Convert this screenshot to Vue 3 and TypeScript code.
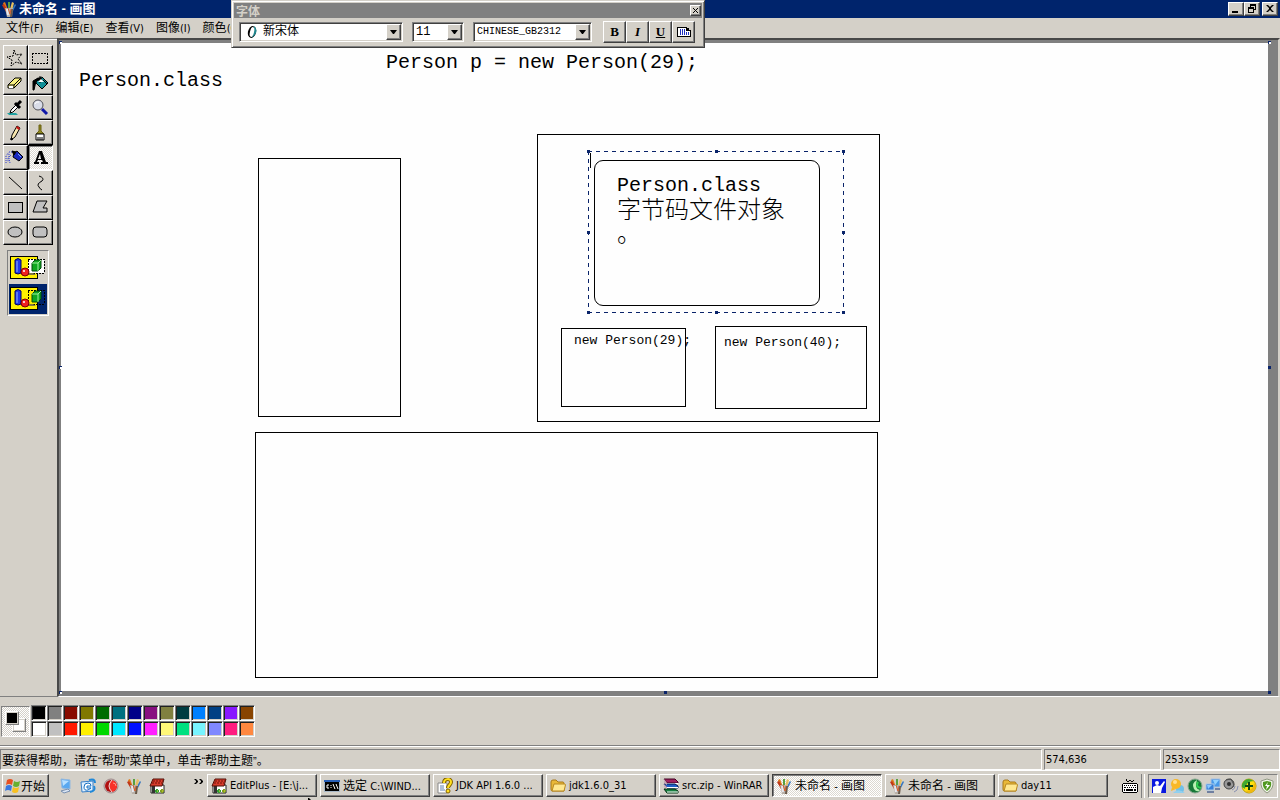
<script setup lang="ts">
import { ref } from 'vue'

interface Box { x: number; y: number; w: number; h: number; round?: boolean }
interface Note { x: number; y: number; text: string; kind: string }
interface Task { icon: string; label: string; active?: boolean }

// Splits a label into Chinese and Latin runs so each gets its own face.
function runs(text: string): { s: string; han: boolean }[] {
  const parts = text.match(/[\u3000-\u9fff\uff00-\uffef]+|[^\u3000-\u9fff\uff00-\uffef]+/g) ?? []
  return parts.map((s) => ({ s, han: /[\u3000-\u9fff\uff00-\uffef]/.test(s) }))
}

const menus = ['文件(F)', '编辑(E)', '查看(V)', '图像(I)', '颜色(C)']

const tools = [
  '任意形状裁剪', '选定', '橡皮', '用颜色填充', '取色', '放大镜', '铅笔', '刷子',
  '喷枪', '文字', '直线', '曲线', '矩形', '多边形', '椭圆', '圆角矩形',
]
const activeTool = ref(9)

const boxes: Box[] = [
  { x: 197, y: 115, w: 143, h: 259 },
  { x: 476, y: 91, w: 343, h: 288 },
  { x: 533, y: 117, w: 226, h: 146, round: true },
  { x: 500, y: 285, w: 125, h: 79 },
  { x: 654, y: 283, w: 152, h: 83 },
  { x: 194, y: 389, w: 623, h: 246 },
]

const notes: Note[] = [
  { x: 18, y: 28, text: 'Person.class', kind: 'large' },
  { x: 325, y: 10, text: 'Person p = new Person(29);', kind: 'large' },
  { x: 556, y: 133, text: 'Person.class', kind: 'large' },
  { x: 556, y: 153, text: '字节码文件对象\n。', kind: 'song' },
  { x: 513, y: 286, text: 'new Person(29);', kind: 'small' },
  { x: 663, y: 288, text: 'new Person(40);', kind: 'small' },
]

const palette = [
  '#000000', '#808080', '#880c00', '#807800', '#006c00', '#007080', '#000088', '#881080', '#808040', '#003c40', '#0080ff', '#004084', '#8818ff', '#884400',
  '#ffffff', '#c0c0c0', '#ff1800', '#fff000', '#00d800', '#00e8ff', '#0010ff', '#ff20ff', '#fff878', '#00e080', '#78f4ff', '#8088ff', '#ff1c80', '#ff8840',
]
const foreground = ref('#000000')

const launchers = [
  { icon: 'desktop', label: '显示桌面' },
  { icon: 'mail', label: 'Outlook Express' },
  { icon: 'red', label: '播放器' },
  { icon: 'paint', label: '画图' },
  { icon: 'edit', label: 'EditPlus' },
]

const tasks: Task[] = [
  { icon: 'edit', label: 'EditPlus - [E:\\j...' },
  { icon: 'cmd', label: '选定 C:\\WIND...' },
  { icon: 'help', label: 'JDK API 1.6.0 ...' },
  { icon: 'folder', label: 'jdk1.6.0_31' },
  { icon: 'rar', label: 'src.zip - WinRAR' },
  { icon: 'paint', label: '未命名 - 画图', active: true },
  { icon: 'paint', label: '未命名 - 画图' },
  { icon: 'folder', label: 'day11' },
]

const tray = ['person', 'chat', 'green', 'net', 'sound', 'plus', 'shield']
</script>

<template>
  <svg class="defs" width="0" height="0" aria-hidden="true">
    <symbol id="i-paint" viewBox="0 0 16 16">
      <path d="M4 8 2 2l2-1 3 8z" fill="#e07818" /><path d="M1 4l2-1 4 7-2 1z" fill="#c03818" />
      <path d="M7 8V1h2v8z" fill="#58a040" /><path d="M9 8l2-7 2 1-2 8z" fill="#e8c060" />
      <path d="M11 8l3-5 1 1-3 6z" fill="#3878c0" />
      <path d="M4 7h8l-1 9H6z" fill="#b8b0a8" /><path d="M6 8l1 6" stroke="#e8e8f0" stroke-width="2" fill="none" />
      <path d="M10 8h2l-1 8H9z" fill="#685848" /><path d="M7 7l2 6 1-5" stroke="#d06030" fill="none" />
    </symbol>
    <symbol id="i-edit" viewBox="0 0 16 16">
      <path d="M2 7h13v8H2z" fill="#fff" stroke="#222" /><path d="M3 8h3v7H3z" fill="#333" />
      <path d="M1 8 4 1h11l-2 7H1z" fill="#d83c2c" stroke="#501008" />
      <path d="M4 3h10M3 5h10" stroke="#701008" stroke-dasharray="2 1" />
      <path d="M6 13h4m-2-2v4" stroke="#30a030" stroke-width="2" /><path d="M11 13h4m-2-2v4" stroke="#80a020" stroke-width="2" />
      <path d="M8 13h1M13 13h1" stroke="#f0d040" />
    </symbol>
    <symbol id="i-cmd" viewBox="0 0 16 16">
      <path d="M0 2h16v12H0z" fill="#a8b8c8" /><path d="M0 2h16v2H0z" fill="#2860b8" /><path d="M1 4h14v9H1z" fill="#000" />
      <path d="M5 7H3v3h2M7 7v1m0 1v1M9 6l2 5M12 6l2 5" stroke="#fff" fill="none" />
    </symbol>
    <symbol id="i-help" viewBox="0 0 16 16">
      <path d="M1 5h9v10H1z" fill="#fff" stroke="#888" /><path d="M3 8h4M3 10h4M3 12h5" stroke="#6080b0" />
      <path d="M7 5c0-5 7-5 7-1 0 3-3 3-3 6" fill="none" stroke="#806000" stroke-width="4" />
      <path d="M7 5c0-5 7-5 7-1 0 3-3 3-3 6" fill="none" stroke="#ffe020" stroke-width="2" />
      <circle cx="11" cy="13" r="2" fill="#ffe020" stroke="#806000" />
    </symbol>
    <symbol id="i-folder" viewBox="0 0 16 16">
      <path d="M1 4q0-2 2-2h3l2 2h5q1 0 1 2v7H2q-1 0-1-2z" fill="#e8b838" stroke="#a87818" />
      <path d="M2 13 4 6h11q1 0 0 3l-1 4z" fill="#ffe890" stroke="#b88820" />
    </symbol>
    <symbol id="i-rar" viewBox="0 0 16 16">
      <path d="M1 1h11l3 3v1H4z" fill="#a02060" stroke="#400020" /><path d="M4 5h11v1H4z" fill="#fff" />
      <path d="M1 6h11l3 2v2H4z" fill="#2060c8" stroke="#001850" /><path d="M4 9h11v1H4z" fill="#fff" />
      <path d="M1 11h11l3 2v2H4z" fill="#188040" stroke="#003010" /><path d="M4 14h11" stroke="#fff" />
      <path d="M1 1l3 4v2L1 5zM1 6l3 3v2L1 9z" fill="#c8a8b8" />
    </symbol>
    <symbol id="i-desktop" viewBox="0 0 16 16">
      <path d="M4 1l9 1v9l-8-1z" fill="#58a8f0" stroke="#90b8e0" /><path d="M5 2l7 1-6 5z" fill="#b8e0ff" />
      <path d="M4 13l7-2 2 2-6 2z" fill="#d8e4f4" stroke="#7890b0" />
    </symbol>
    <symbol id="i-mail" viewBox="0 0 16 16">
      <path d="M1 4l12-1v10l-11 1z" fill="#e0f0ff" stroke="#3880c8" />
      <path d="M8 5q-4 0-4 4t4 3l3-2H7V8h4q0-3-3-3z" fill="#fff" stroke="#1870c0" />
      <path d="M9 2q6-2 6 3M14 8q2 5-4 6" fill="none" stroke="#2088d8" stroke-width="2" />
    </symbol>
    <symbol id="i-red" viewBox="0 0 16 16">
      <circle cx="8" cy="8" r="7" fill="#c8c4c4" stroke="#a08888" /><circle cx="8" cy="8" r="6" fill="#b01010" />
      <path d="M9 2q-6 6 0 12 5-2 5-6t-5-6z" fill="#f83028" /><path d="M9 2q-6 6 0 12" fill="none" stroke="#f0d8d8" />
      <path d="M10 5q3 0 3 3" fill="none" stroke="#ff9888" />
    </symbol>
    <symbol id="i-person" viewBox="0 0 16 16">
      <path d="M1 1h14v14H1z" fill="#0818e0" /><path d="M2 15V9l4-2 3 1 4-5 1 1-3 6-1 5z" fill="#fff" /><circle cx="6" cy="5" r="2" fill="#fff" />
    </symbol>
    <symbol id="i-chat" viewBox="0 0 16 16">
      <circle cx="11" cy="11" r="4" fill="#70c0e8" /><path d="M5 14q5-4 11 1H4z" fill="#90d0f0" />
      <circle cx="7" cy="6" r="5" fill="#f8b828" /><path d="M3 9l-1 4 5-2z" fill="#f8b828" /><circle cx="6" cy="4" r="2" fill="#ffe090" />
    </symbol>
    <symbol id="i-green" viewBox="0 0 16 16">
      <circle cx="8" cy="8" r="7" fill="#187838" stroke="#88a890" /><path d="M10 2q-6 3-3 9 3 4 6 1-6-1-3-10z" fill="#b8f0b0" />
      <path d="M11 4q-3 5 3 6" stroke="#30d050" stroke-width="2" fill="none" />
    </symbol>
    <symbol id="i-net" viewBox="0 0 16 16">
      <path d="M6 1h9v8H6z" fill="#4898e8" stroke="#a8c0e0" /><path d="M8 2h6l-4 5z" fill="#90d0ff" />
      <path d="M1 6h8v6H1z" fill="#3880d8" stroke="#a8c8e8" /><path d="M2 7h5l-4 4z" fill="#88c8ff" /><path d="M2 14h7M10 11h5" stroke="#7080a0" stroke-width="2" />
    </symbol>
    <symbol id="i-sound" viewBox="0 0 16 16">
      <circle cx="6" cy="6" r="5" fill="#989898" stroke="#404040" /><circle cx="6" cy="6" r="2" fill="#303030" />
      <path d="M3 2l5-1 3 6-2 3" fill="none" stroke="#505050" /><path d="M9 12q3-1 3-4M11 14q4-1 4-6" fill="none" stroke="#8890b0" />
    </symbol>
    <symbol id="i-plus" viewBox="0 0 16 16">
      <circle cx="8" cy="8" r="7" fill="#ffe010" stroke="#b8a010" /><path d="M1 9a7 7 0 0 1 7-8l5 2q-8 0-9 8z" fill="#40a830" />
      <path d="M15 7a7 7 0 0 1-7 8l-4-2q8 0 9-8z" fill="#f0b810" /><path d="M8 4v8M4 8h8" stroke="#104810" stroke-width="2" />
    </symbol>
    <symbol id="i-shield" viewBox="0 0 16 16">
      <path d="M8 1l6 2q1 8-6 12-7-4-6-12z" fill="#f0f4e8" stroke="#909880" /><path d="M8 3l4 1q1 6-4 9-5-3-4-9z" fill="#509820" />
      <path d="M9 4 6 8h2l-1 4 4-5H8z" fill="#fff" />
    </symbol>
  </svg>

  <div class="screen">
    <header class="title-bar">
      <svg class="ic" viewBox="0 0 16 16" aria-hidden="true"><use href="#i-paint" /></svg>
      <h1>未命名 - 画图</h1>
      <div class="win-buttons">
        <button class="raised" aria-label="最小化"><svg viewBox="0 0 12 10"><path d="M2 7h6v2H2z" /></svg></button>
        <button class="raised" aria-label="还原"><svg viewBox="0 0 12 10"><path d="M4 0h6v6H8V5h1V2H5v1H4zM2 3h6v6H2zm1 2v3h4V5z" fill-rule="evenodd" /></svg></button>
        <button class="raised close" aria-label="关闭"><svg viewBox="0 0 12 10"><path d="M2 1h2l2 2 2-2h2L7 4v1l3 3H8L6 6 4 8H2l3-3V4z" /></svg></button>
      </div>
    </header>

    <nav class="menu-bar">
      <button v-for="m in menus" :key="m"><span v-for="(r, i) in runs(m)" :key="i" :class="{ han: r.han }">{{ r.s }}</span></button>
    </nav>

    <div class="workspace">
      <aside class="toolbox">
        <div class="tools">
          <button v-for="(t, i) in tools" :key="t" :aria-label="t" :aria-pressed="activeTool === i" :class="['raised', { on: activeTool === i }]" @click="activeTool = i">
            <svg viewBox="0 0 20 20" fill="none" stroke="#000">
              <path v-if="i === 0" d="M9 2l2 5 6-1-4 5 4 5-6-2-5 4 1-6-5-3 6-1z" stroke-dasharray="2 1" />
              <path v-else-if="i === 1" d="M2 5h15v10H2z" stroke-dasharray="2 1" class="px" />
              <g v-else-if="i === 2"><path d="M3 12l7-7h6v3l-7 7H3z" fill="#f8f080" /><path d="M3 12h6l7-7M9 12v3" /><path d="M4 13h4v2H4z" fill="#fff" stroke="none" /></g>
              <g v-else-if="i === 3"><path d="M7 6l5-2 6 6-6 6-6-6z" fill="#109098" /><path d="M3 17V8l5-3 4 1-6 2-2 9z" fill="#000" /><path d="M10 3v7M13 7l4 4" /><path d="M8 9l3-3 3 3z" fill="#fff" stroke="none" /></g>
              <g v-else-if="i === 4"><path d="M2 15h9l2 2H4z" fill="#20a0a0" stroke="none" /><path d="M5 15l1-3 5-5 2 2-5 5z" fill="#fff" /><path d="M10 5l5 5M12 7l4-4" stroke-width="3" /></g>
              <g v-else-if="i === 5"><circle cx="8" cy="7" r="5" fill="#d8dce8" stroke="#505058" /><path d="M5 6q1-3 4-2" stroke="#fff" /><path d="M12 11l5 5" stroke="#1018a8" stroke-width="3" /></g>
              <g v-else-if="i === 6"><path d="M6 17l1-5 5-9 3 2-5 9z" fill="#f8e8b0" /><path d="M12 3l3 2-1 2-3-2z" fill="#c81818" stroke="none" /><path d="M6 17v-2l2 1z" fill="#000" /></g>
              <g v-else-if="i === 7"><path d="M9 2h2v6l3 3H6l3-3z" fill="#908820" stroke="#686010" /><path d="M6 11h8v6H6z" fill="#fff" /><path d="M8 14v3M10 14v3M12 14v3" /></g>
              <g v-else-if="i === 8"><path d="M9 5l3-2 6 6-4 4-6-4z" fill="#1828c0" /><path d="M7 3l4 1-2 3z" fill="#000" /><path d="M13 6l3 3" stroke="#80a8f8" /><path d="M7 4H4L1 8v7M4 6v5l1 4M6 7l-3 3v4" stroke="#2838d0" stroke-dasharray="1 1" /></g>
              <path v-else-if="i === 9" d="M9 3h3l4 11h2v2h-7v-2h2l-1-2H8l-1 2h2v2H4v-2h1zM10 6l-2 5h3z" fill="#000" fill-rule="evenodd" stroke="none" />
              <path v-else-if="i === 10" d="M4 4l13 12" />
              <path v-else-if="i === 11" d="M9 3q6 2 3 5-6 3-3 6 1 2 3 3" />
              <path v-else-if="i === 12" d="M3 4h14v10H3z" fill="#c0c0c0" class="px" />
              <path v-else-if="i === 13" d="M7 3h10l-4 7h4v4H3z" fill="#c0c0c0" />
              <ellipse v-else-if="i === 14" cx="10" cy="9" rx="7" ry="5" fill="#c0c0c0" />
              <rect v-else x="3" y="4" width="14" height="10" rx="3" fill="#c0c0c0" />
            </svg>
          </button>
        </div>
        <div class="options">
          <button v-for="n in 2" :key="n" :class="{ chosen: n === 2 }" :aria-label="n === 1 ? '不透明处理' : '透明处理'">
            <svg viewBox="1 2 38 28">
              <path class="px" d="M2 4h27v22H2z" fill="#fff000" stroke="#000" />
              <path v-if="n === 1" d="M20 7h16v14H20z" fill="#fff" />
              <path class="px" d="M20 7h16v14H20z" fill="none" stroke="#000" stroke-dasharray="2 1" />
              <path d="M7 8q3-3 6 0v13q-3 2-6 0z" fill="#2038e8" stroke="#000060" /><path d="M9 9v11" stroke="#90b8ff" />
              <path d="M18 23h10l-3-2h-6z" fill="#807840" /><circle cx="17" cy="20" r="4" fill="#f02020" stroke="#800000" /><circle cx="16" cy="19" r="1" fill="#fff" />
              <path d="M24 11l3-3h6v8l-3 3h-6z" fill="#10a820" stroke="#004808" /><path d="M24 11h6v8M30 11l3-3" stroke="#a0f0a0" fill="none" />
            </svg>
          </button>
        </div>
      </aside>

      <main class="pane">
        <div class="canvas">
          <div v-for="(b, i) in boxes" :key="i" :class="['box', { round: b.round }]" :style="{ left: b.x + 'px', top: b.y + 'px', width: b.w + 'px', height: b.h + 'px' }"></div>
          <p v-for="(n, i) in notes" :key="'n' + i" :class="['note', n.kind]" :style="{ left: n.x + 'px', top: n.y + 'px' }">{{ n.text }}</p>
          <div class="selection">
            <textarea aria-label="文字"></textarea>
            <i class="caret"></i>
            <i v-for="h in ['nw', 'n', 'ne', 'w', 'e', 'sw', 's', 'se']" :key="h" :class="['grip', h]"></i>
          </div>
        </div>
        <i v-for="h in ['tl', 'tr', 'ml', 'bl']" :key="h" :class="['handle', 'hollow', h]"></i>
        <i v-for="h in ['mr', 'bm', 'br']" :key="h" :class="['handle', h]"></i>
      </main>
    </div>

    <section class="color-bar" aria-label="颜料盒">
      <div class="current"><i class="back"></i><i class="front" :style="{ background: foreground }"></i></div>
      <div class="swatches">
        <button v-for="c in palette" :key="c" :aria-label="c" :style="{ background: c }" @click="foreground = c"></button>
      </div>
    </section>

    <footer class="status-bar">
      <div class="cell grow"><span v-for="(r, i) in runs('要获得帮助，请在“帮助”菜单中，单击“帮助主题”。')" :key="i" :class="{ han: r.han, quote: !r.han }">{{ r.s }}</span></div>
      <div class="cell">574,636</div>
      <div class="cell">253x159</div>
    </footer>

    <div class="taskbar">
      <button class="start raised">
        <svg class="ic" viewBox="0 0 16 16" aria-hidden="true">
          <path d="M3 2q3-2 6 0L8 7q-3-2-6 0z" fill="#e85020" /><path d="M10 3q3 2 6 0l-1 5q-3 2-6 0z" fill="#68b030" />
          <path d="M2 8q3-2 6 0l-1 5q-3-2-6 0z" fill="#3878e0" /><path d="M9 9q3 2 6 0l-1 5q-3 2-6 0z" fill="#f8c020" />
        </svg><span class="han">开始</span>
      </button>
      <div class="quick">
        <button v-for="l in launchers" :key="l.icon" :aria-label="l.label"><svg class="ic" viewBox="0 0 16 16"><use :href="'#i-' + l.icon" /></svg></button>
      </div>
      <button class="more" aria-label="更多"><svg viewBox="0 0 9 6"><path d="M0 0h2l2 2v1L2 5H0l2-2V2zM5 0h2l2 2v1L7 5H5l2-2V2z" /></svg></button>
      <div class="tasks">
        <button v-for="(t, i) in tasks" :key="i" :class="['raised', { on: t.active }]">
          <svg class="ic" viewBox="0 0 16 16" aria-hidden="true"><use :href="'#i-' + t.icon" /></svg>
          <span class="label"><span v-for="(r, k) in runs(t.label)" :key="k" :class="{ han: r.han }">{{ r.s }}</span></span>
        </button>
      </div>
      <svg class="keyboard px" viewBox="0 0 16 14" aria-label="输入法">
        <path d="M4 0h1v2H4zM5 2h2v1H5zM7 1h2v1H7zM9 2h2v1H9zM11 1h1v1h-1z" />
        <path fill-rule="evenodd" d="M1 4h14v1h1v8h-1v1H1v-1H0V5h1zM1 5v8h14V5z" /><path d="M1 5h14v8H1z" fill="#fff" />
        <path d="M2 6h1v1H2zM4 6h1v1H4zM6 6h1v1H6zM8 6h1v1H8zM10 6h1v1h-1zM12 6h2v1h-2zM2 8h2v1H2zM5 8h1v1H5zM7 8h1v1H7zM9 8h1v1H9zM11 8h1v1h-1zM13 8h1v1h-1zM2 10h1v2H2zM4 10h7v2H4zM12 10h2v2h-2z" />
      </svg>
      <div class="tray">
        <button v-for="t in tray" :key="t" :aria-label="t"><svg class="ic" viewBox="0 0 16 16"><use :href="'#i-' + t" /></svg></button>
      </div>
    </div>

    <section class="font-window" aria-label="字体">
      <div class="font-title"><h2>字体</h2><button class="raised" aria-label="关闭"><svg viewBox="0 0 9 9" stroke="#000"><path d="M2 2l5 5M7 2l-5 5" /></svg></button></div>
      <div class="font-tools">
        <div class="combo face">
          <svg class="opentype" viewBox="0 0 12 14" aria-hidden="true"><ellipse cx="6" cy="7" rx="4" ry="6" transform="rotate(14 6 7)" fill="#000" /><path d="M8 1q6 5-2 12z" fill="#208890" /><ellipse cx="6" cy="7" rx="2" ry="5" transform="rotate(14 6 7)" fill="#fff" /></svg>
          <select aria-label="字体"><option>新宋体</option></select>
          <span class="arrow raised"><svg viewBox="0 0 7 4"><path d="M0 0h7L4 4H3z" /></svg></span>
        </div>
        <div class="combo size">
          <select aria-label="字号"><option>11</option></select>
          <span class="arrow raised"><svg viewBox="0 0 7 4"><path d="M0 0h7L4 4H3z" /></svg></span>
        </div>
        <div class="combo charset">
          <select aria-label="字符集"><option>CHINESE_GB2312</option></select>
          <span class="arrow raised"><svg viewBox="0 0 7 4"><path d="M0 0h7L4 4H3z" /></svg></span>
        </div>
        <div class="styles">
          <button class="raised"><b>B</b></button>
          <button class="raised"><em>I</em></button>
          <button class="raised"><u>U</u></button>
          <button class="raised" aria-label="竖排文字"><svg class="px" viewBox="0 0 14 10"><path d="M0 0h10v1h2v2h2v7H0z" /><path d="M1 1h9v3h3v5H1z" fill="#fff" /><path d="M3 2h1v6H3zM5 2h1v6H5zM7 2h1v6H7zM9 5h1v3H9zM11 5h1v3h-1z" fill="#2030c0" /><path d="M9 1h1v2h3v1H9z" /></svg></button>
        </div>
      </div>
    </section>
    <svg class="pointer" viewBox="0 0 3 2" aria-hidden="true"><path d="M0 0h1l2 2H0z" /></svg>
  </div>
</template>

<style>
body { overflow: hidden; }
</style>

<style scoped>
* { box-sizing: border-box; }
.defs { position: absolute; }
.screen {
  position: relative;
  display: flex;
  flex-direction: column;
  height: 100vh;
  background: #d4d0c8;
  color: #000;
  font: 11px/14px "DejaVu Sans Condensed", "Liberation Sans", "Noto Sans CJK SC", sans-serif;
}
.han { font-family: "Noto Sans CJK SC", sans-serif; font-size: 12px; }
.quote { font-family: "Liberation Sans", sans-serif; }
button { font: inherit; color: inherit; background: none; border: 0; padding: 0; margin: 0; }
button svg { display: block; flex: none; }
h1, h2, p { margin: 0; }
.ic { width: 16px; height: 16px; flex: none; display: block; }
.px { shape-rendering: crispEdges; }
.raised {
  background: #d4d0c8;
  border: 1px solid;
  border-color: #fff #404040 #404040 #fff;
  box-shadow: inset -1px -1px #808080;
}
.on {
  background: repeating-conic-gradient(#fff 0 25%, #dcd8d0 0 50%) 0 0 / 2px 2px;
  border-color: #404040 #fff #fff #404040;
  box-shadow: inset 1px 1px #808080;
}

.title-bar { display: flex; align-items: center; height: 18px; padding: 0 2px 0 1px; background: #00246c; flex: none; }
.title-bar h1 { flex: 1; margin-left: 2px; color: #fff; font: bold 13px/18px "Liberation Sans", "Noto Sans CJK SC", sans-serif; }
.win-buttons { display: flex; }
.win-buttons button { width: 16px; height: 14px; padding: 1px; }
.win-buttons svg { width: 12px; height: 10px; }
.win-buttons .close { margin-left: 2px; }

.menu-bar { display: flex; height: 20px; flex: none; }
.menu-bar button { padding: 0 6px; white-space: nowrap; }

.workspace { display: flex; flex: 1; min-height: 0; }
.toolbox { width: 57px; flex: none; padding: 6px 3px 0; border-top: 1px solid #808080; border-bottom: 1px solid #808080; box-shadow: inset 0 1px #fff; }
.tools { display: grid; grid-template-columns: 25px 25px; grid-auto-rows: 25px; }
.tools button { border-color: #fff #000 #000 #fff; padding: 2px 1px; }
.tools .on { border-color: #000 #fff #fff #000; }
.tools svg { width: 20px; height: 20px; }
.options { width: 42px; margin: 5px 0 0 4px; padding: 1px; border: 1px solid; border-color: #808080 #fff #fff #808080; }
.options button { display: block; width: 38px; height: 30px; padding: 1px 0; }
.options button:first-child { height: 32px; }
.options .chosen { background: #00246c; }
.options svg { width: 38px; height: 28px; }

.pane {
  position: relative;
  flex: 1;
  min-width: 0;
  display: flex;
  padding: 3px 10px 5px 2px;
  background: #808080;
  border: 2px solid;
  border-color: #484848 #d4d0c8 #fff #484848;
  border-bottom-width: 1px;
}
.canvas { position: relative; flex: 1; overflow: hidden; background: #fefefe; }
.box { position: absolute; border: 1px solid #000; }
.box.round { border-radius: 9px; }
.note { position: absolute; white-space: pre; }
.large { font: 20px/20px "Liberation Mono", monospace; }
.small { font: 13px/24px "Liberation Mono", monospace; }
.song { font: 300 24px/24px "Noto Sans CJK SC", sans-serif; }
.selection {
  position: absolute;
  left: 527px;
  top: 108px;
  width: 256px;
  height: 162px;
  background:
    repeating-linear-gradient(90deg, #0a246a 0 4px, transparent 4px 8px) 0 0 / 100% 1px no-repeat,
    repeating-linear-gradient(90deg, #0a246a 0 4px, transparent 4px 8px) 0 100% / 100% 1px no-repeat,
    repeating-linear-gradient(#0a246a 0 4px, transparent 4px 8px) 0 0 / 1px 100% no-repeat,
    repeating-linear-gradient(#0a246a 0 4px, transparent 4px 8px) 100% 0 / 1px 100% no-repeat;
}
.selection textarea { display: block; width: 100%; height: 100%; padding: 2px; border: 0; outline: 0; background: transparent; resize: none; font: 15px/15px "Liberation Mono", monospace; }
.caret { position: absolute; left: 2px; top: 2px; width: 1px; height: 15px; background: #000; }
.grip { position: absolute; width: 3px; height: 3px; background: #0a246a; }
.nw, .n, .ne { top: -1px; }
.sw, .s, .se { bottom: -1px; }
.w, .e { top: 80px; }
.nw, .w, .sw { left: -1px; }
.n, .s { left: 127px; }
.ne, .e, .se { right: -1px; }
.handle { position: absolute; width: 3px; height: 3px; background: #0a246a; }
.hollow { background: #fff; border: solid #0a246a; border-width: 1px 0 0 1px; }
.tl, .tr { top: 1px; }
.tl, .ml, .bl { left: 0; }
.tr, .mr, .br { right: 7px; }
.ml, .mr { top: calc(50% - 2px); }
.bl, .bm, .br { bottom: 2px; }
.bm { left: calc(50% - 5px); }

.color-bar { display: flex; align-items: center; flex: none; height: 49px; padding-left: 1px; gap: 1px; border-bottom: 1px solid #808080; }
.current { position: relative; width: 29px; height: 31px; border: 1px solid; border-color: #808080 #fff #fff #808080; background: repeating-conic-gradient(#fff 0 25%, #d4d0c8 0 50%) 0 0 / 2px 2px; }
.current i { position: absolute; width: 14px; height: 14px; border: 1px solid; border-color: #fff #808080 #808080 #fff; box-shadow: inset 0 0 0 1px #d4d0c8; }
.current .front { left: 3px; top: 4px; }
.current .back { left: 10px; top: 11px; background: #fff; }
.swatches { display: grid; grid-template-columns: repeat(14, 16px); grid-auto-rows: 16px; }
.swatches button { border: 1px solid; border-color: #808080 #fff #fff #808080; box-shadow: inset 1px 1px #202020, inset -1px -1px #d4d0c8; }

.status-bar { display: flex; flex: none; height: 24px; gap: 2px; padding-top: 2px; border-top: 1px solid #fff; }
.cell { width: 117px; padding: 0 1px; line-height: 19px; height: 21px; border: 1px solid; border-color: #808080 #fff #fff #808080; white-space: nowrap; }
.grow { flex: 1; }

.taskbar { display: flex; align-items: flex-start; flex: none; height: 30px; padding: 3px 2px 0; border-top: 1px solid #fff; }
.start { display: flex; align-items: center; width: 47px; height: 23px; padding: 0 1px; flex: none; }
.start .han { margin-left: 1px; white-space: nowrap; }
.quick { display: flex; gap: 7px; margin: 4px 0 0 8px; }
.more { width: 9px; margin: 5px 0 0 29px; }
.more svg { width: 9px; height: 6px; }
.tasks { display: grid; grid-template-columns: repeat(8, 110px); gap: 3px; flex: 1; margin-left: 4px; }
.tasks button { display: flex; align-items: center; gap: 3px; height: 23px; padding: 0 3px; overflow: hidden; }
.tasks .label { white-space: nowrap; }
.keyboard { width: 16px; height: 14px; margin: 5px 2px 0 0; flex: none; }
.tray { position: relative; display: flex; flex: none; gap: 2px; height: 24px; padding: 3px 2px; margin-left: 8px; border: 1px solid; border-color: #808080 #fff #fff #808080; }
.tray::before { content: ""; position: absolute; left: -8px; top: -1px; width: 2px; height: 24px; border-left: 1px solid #808080; border-right: 1px solid #fff; }

.font-window { position: absolute; left: 231px; top: 0; width: 474px; height: 48px; padding: 2px; background: #d4d0c8; border: 1px solid; border-color: #d4d0c8 #404040 #404040 #d4d0c8; box-shadow: inset 1px 1px #fff, inset -1px -1px #808080; }
.font-title { display: flex; align-items: center; justify-content: space-between; height: 15px; padding: 0 1px 0 2px; background: #808080; }
.font-title h2 { color: #d4d0c8; font: bold 12px/15px "Noto Sans CJK SC", sans-serif; }
.font-title button { width: 11px; height: 11px; }
.font-title svg { width: 9px; height: 9px; }
.font-tools { display: flex; align-items: center; gap: 9px; height: 28px; padding-left: 5px; }
.combo { display: flex; align-items: center; height: 20px; padding: 1px; background: #fff; border: 1px solid; border-color: #808080 #fff #fff #808080; box-shadow: inset 1px 1px #404040, inset -1px -1px #d4d0c8; }
.combo select { flex: 1; min-width: 0; height: 16px; padding: 0 0 0 2px; border: 0; appearance: none; background: transparent; color: #000; font: 12px/16px "Liberation Mono", "Noto Sans CJK SC", monospace; }
.face { width: 164px; }
.size { width: 52px; }
.charset { width: 119px; }
.charset select { font-size: 10px; }
.opentype { width: 12px; height: 14px; margin-left: 5px; }
.face select { padding-left: 5px; }
.arrow { display: flex; align-items: center; justify-content: center; width: 15px; height: 16px; pointer-events: none; }
.arrow svg { width: 7px; height: 4px; }
.styles { display: flex; margin-left: 2px; }
.styles button { display: flex; align-items: center; justify-content: center; width: 23px; height: 22px; font: bold 13px/16px "Liberation Serif", serif; }
.styles svg { width: 14px; height: 10px; }
.pointer { position: absolute; left: 308px; bottom: 0; width: 3px; height: 2px; }
</style>
